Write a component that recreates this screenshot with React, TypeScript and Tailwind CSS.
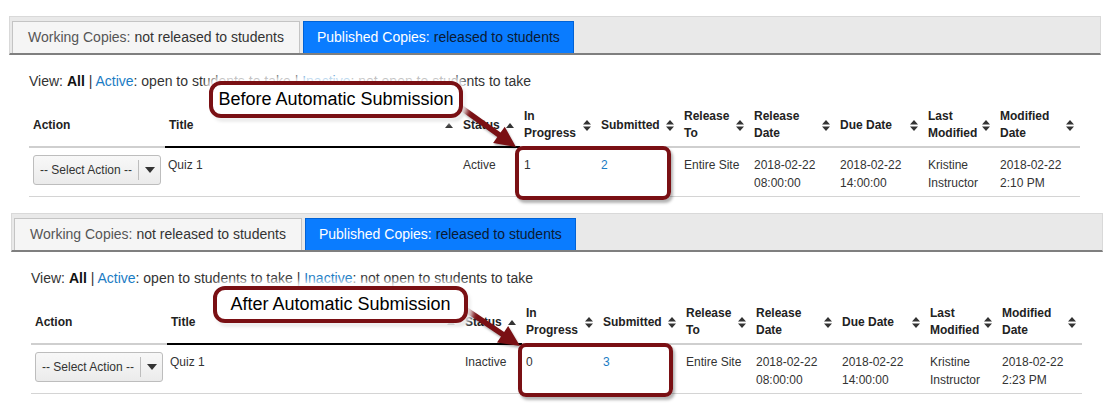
import React from 'react'

const RED = '#7a1014'
const FONT = { fontFamily: '"Liberation Sans", Arial, sans-serif' }

type Sort = 'up' | 'both' | null

const HEADERS: { label: string[]; sort: Sort; w: number; dark?: boolean }[] = [
  { label: ['Action'], sort: null, w: 136 },
  { label: ['Title'], sort: 'up', w: 294, dark: true },
  { label: ['Status'], sort: 'up', w: 61, dark: true },
  { label: ['In', 'Progress'], sort: 'both', w: 77 },
  { label: ['Submitted'], sort: 'both', w: 83 },
  { label: ['Release', 'To'], sort: 'both', w: 70 },
  { label: ['Release', 'Date'], sort: 'both', w: 86 },
  { label: ['Due Date'], sort: 'both', w: 88 },
  { label: ['Last', 'Modified'], sort: 'both', w: 72 },
  { label: ['Modified', 'Date'], sort: 'both', w: 84 },
]

function SortIcon({ sort }: { sort: Sort }) {
  if (sort === 'up')
    return (
      <svg width="8" height="5" viewBox="0 0 8 5" className="shrink-0">
        <path d="M0 5 L4 0 L8 5 Z" fill="#333" />
      </svg>
    )
  if (sort === 'both')
    return (
      <svg width="8" height="11" viewBox="0 0 8 11" className="shrink-0">
        <path d="M0 4.5 L4 0 L8 4.5 Z M0 6.5 L4 11 L8 6.5 Z" fill="#333" />
      </svg>
    )
  return null
}

function Arrow({ x1, y1, x2, y2 }: { x1: number; y1: number; x2: number; y2: number }) {
  const dx = x2 - x1
  const dy = y2 - y1
  const len = Math.hypot(dx, dy)
  const ux = dx / len
  const uy = dy / len
  const px = -uy
  const py = ux
  const head = 21
  const hw = 10
  const sw = 2.8
  const bx = x2 - ux * head
  const by = y2 - uy * head
  const pts = [
    [x1 + px * sw, y1 + py * sw],
    [bx + px * sw, by + py * sw],
    [bx + px * hw, by + py * hw],
    [x2, y2],
    [bx - px * hw, by - py * hw],
    [bx - px * sw, by - py * sw],
    [x1 - px * sw, y1 - py * sw],
  ]
    .map((p) => p.join(','))
    .join(' ')
  return (
    <svg
      width="1111"
      height="220"
      className="absolute left-0 top-0 pointer-events-none drop-shadow-[1px_2px_1px_rgba(0,0,0,0.3)]"
    >
      <polygon points={pts} fill={RED} />
    </svg>
  )
}

interface PanelProps {
  dx: number
  status: string
  inProgress: string
  submitted: string
  modifiedTime: string
  callout: string
  box: { left: number; top: number; w: number }
  arrow: { x1: number; y1: number; x2: number; y2: number }
  hi: { left: number; w: number }
}

function Panel({ dx, status, inProgress, submitted, modifiedTime, callout, box, arrow, hi }: PanelProps) {
  return (
    <div className="relative h-[197px]" style={{ paddingLeft: 9 + dx }}>
      <div className="pt-[16px]">
        {/* tabs */}
        <div className="w-[1092px] h-[39px] bg-[#e9e9e9] border border-[#d9d9d9] border-b-2 border-b-[#7f7f7f] flex items-end pl-[2px] gap-[3px] text-[14px]">
          <div className="h-[32px] px-[15px] flex items-center whitespace-nowrap bg-[#f5f5f5] border border-b-0 border-[#c4c4c4] text-[#555]">
            Working Copies: <span className="ml-[4px] text-[#333]">not released to students</span>
          </div>
          <div className="h-[32px] px-[13px] flex items-center whitespace-nowrap bg-[#0a7cff] border border-b-0 border-[#0062d6] text-white">
            Published Copies: <span className="ml-[4px] text-[#0b1a33]">released to students</span>
          </div>
        </div>

        {/* view filter */}
        <div className="mt-[16px] ml-[20px] text-[14px] leading-[20px] text-[#333]">
          View: <b className="text-[#111]">All</b> | <span className="text-[#1a7cc4]">Active</span>: open to students to take |{' '}
          <span className="text-[#1a7cc4]">Inactive</span>: not open to students to take
        </div>

        {/* table */}
        <table className="mt-[9px] ml-[20px] w-[1051px] table-fixed border-collapse text-[12px] text-[#333]">
          <colgroup>
            {HEADERS.map((h, i) => (
              <col key={i} style={{ width: h.w }} />
            ))}
          </colgroup>
          <thead>
            <tr>
              {HEADERS.map((h, i) => (
                <th
                  key={i}
                  className={`pt-[8px] pb-[4px] pl-[4px] pr-[6px] font-bold text-left align-middle leading-[17px] text-[#222] border-b-2 ${
                    h.dark ? 'border-b-black' : 'border-b-[#cfcfcf]'
                  }`}
                >
                  <div className="flex items-center justify-between">
                    <div>
                      {h.label.map((l, j) => (
                        <div key={j} className="whitespace-nowrap">
                          {l}
                        </div>
                      ))}
                    </div>
                    <SortIcon sort={h.sort} />
                  </div>
                </th>
              ))}
            </tr>
          </thead>
          <tbody>
            <tr className="border-b border-[#d4d4d4] align-top leading-[18px]">
              <td className="pt-[7px] pb-[4px] pl-[4px]">
                <div className="w-[128px] h-[30px] flex items-center rounded-[3px] border border-[#bdbdbd] bg-gradient-to-b from-[#f8f8f8] to-[#ebebeb] text-[#333]">
                  <span className="pl-[6px] pr-[6px] whitespace-nowrap">-- Select Action --</span>
                  <span className="h-[20px] w-px bg-[#bdbdbd]" />
                  <svg width="10" height="6" viewBox="0 0 10 6" className="ml-[6px]">
                    <path d="M0 0 L10 0 L5 6 Z" fill="#333" />
                  </svg>
                </div>
              </td>
              <td className="pt-[8px] pb-[4px] pl-[3px]">Quiz 1</td>
              <td className="pt-[8px] pb-[4px] pl-[4px]">{status}</td>
              <td className="pt-[8px] pb-[4px] pl-[4px]">{inProgress}</td>
              <td className="pt-[8px] pb-[4px] pl-[4px] text-[#1a7cc4]">{submitted}</td>
              <td className="pt-[8px] pb-[4px] pl-[4px] whitespace-nowrap">Entire Site</td>
              <td className="pt-[8px] pb-[4px] pl-[4px]">
                2018-02-22
                <br />
                08:00:00
              </td>
              <td className="pt-[8px] pb-[4px] pl-[4px]">
                2018-02-22
                <br />
                14:00:00
              </td>
              <td className="pt-[8px] pb-[4px] pl-[4px]">
                Kristine
                <br />
                Instructor
              </td>
              <td className="pt-[8px] pb-[4px] pl-[4px]">
                2018-02-22
                <br />
                {modifiedTime}
              </td>
            </tr>
          </tbody>
        </table>
      </div>

      {/* annotations */}
      <Arrow {...arrow} />
      <div
        className="absolute h-[37px] flex items-center justify-center bg-white border-[4px] border-[#7a1014] rounded-[12px] text-[18px] text-black whitespace-nowrap shadow-[0_0_5px_5px_rgba(255,255,255,0.85),2px_3px_3px_rgba(0,0,0,0.35)]"
        style={{ left: box.left, top: box.top, width: box.w }}
      >
        {callout}
      </div>
      <div
        className="absolute top-[146px] h-[54px] border-[4px] border-[#7a1014] rounded-[8px] shadow-[2px_3px_3px_rgba(0,0,0,0.3)]"
        style={{ left: hi.left, width: hi.w }}
      />
    </div>
  )
}

export default function App() {
  return (
    <div className="w-[1111px] h-[403px] bg-white overflow-hidden" style={FONT}>
      <Panel
        dx={0}
        status="Active"
        inProgress="1"
        submitted="2"
        modifiedTime="2:10 PM"
        callout="Before Automatic Submission"
        box={{ left: 209, top: 81, w: 254 }}
        arrow={{ x1: 456, y1: 104, x2: 516, y2: 147 }}
        hi={{ left: 515, w: 156 }}
      />
      <Panel
        dx={2}
        status="Inactive"
        inProgress="0"
        submitted="3"
        modifiedTime="2:23 PM"
        callout="After Automatic Submission"
        box={{ left: 213, top: 89, w: 255 }}
        arrow={{ x1: 462, y1: 110, x2: 520, y2: 149 }}
        hi={{ left: 518, w: 155 }}
      />
    </div>
  )
}
